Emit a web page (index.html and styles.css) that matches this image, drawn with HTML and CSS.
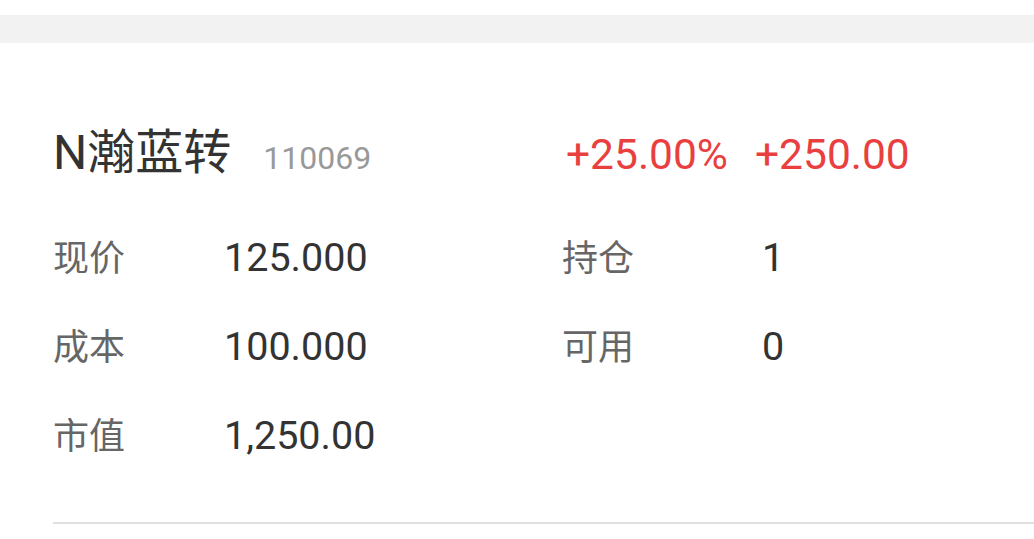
FILE: index.html
```html
<!doctype html>
<html lang="zh-CN">
  <head>
    <meta charset="utf-8" />
    <title>持仓详情</title>
    <link rel="stylesheet" href="styles.css">
  </head>
  <body>
    <div class="band"></div>

    <section class="position">
      <div class="head">
        <div class="name">
          <span class="title">N瀚蓝转</span>
          <span class="code">110069</span>
        </div>
        <div class="change">
          <span>+25.00%</span>
          <span>+250.00</span>
        </div>
      </div>

      <dl class="fields">
        <dt>现价</dt><dd>125.000</dd>
        <dt class="right">持仓</dt><dd>1</dd>
        <dt>成本</dt><dd>100.000</dd>
        <dt class="right">可用</dt><dd>0</dd>
        <dt>市值</dt><dd>1,250.00</dd>
      </dl>

      <hr class="rule" />
    </section>
  </body>
</html>
```

FILE: styles.css
```css
html {
  font-family: Roboto, "Noto Sans CJK SC", sans-serif;
  color: #333;
  background: #fff;
}

body {
  margin: 0;
}

.band {
  margin-top: 15px;
  height: 28px;
  background: #f2f2f2;
}

.position {
  padding-left: 53px;
}

.head {
  display: flex;
  align-items: baseline;
  height: 101px;
  margin-top: 70px;
}

.name {
  display: flex;
  align-items: baseline;
  width: 513px;
}

.title {
  font-size: 48px;
}

.code {
  margin-left: 32px;
  font-size: 32px;
  color: #999;
}

.change {
  display: flex;
  gap: 27px;
  font-size: 42.5px;
  color: #e9403f;
}

.fields {
  display: grid;
  grid-template-columns: 171px 338px 200px auto;
  align-items: baseline;
  margin: 0;
  line-height: 88px;
}

.fields dt {
  font-size: 36px;
  color: #666;
}

.fields dd {
  margin: 0;
  font-size: 39.5px;
  color: #333;
}

.rule {
  margin: 41px 0 0;
  border: 0;
  height: 2px;
  background: #e0e0e0;
}
```
